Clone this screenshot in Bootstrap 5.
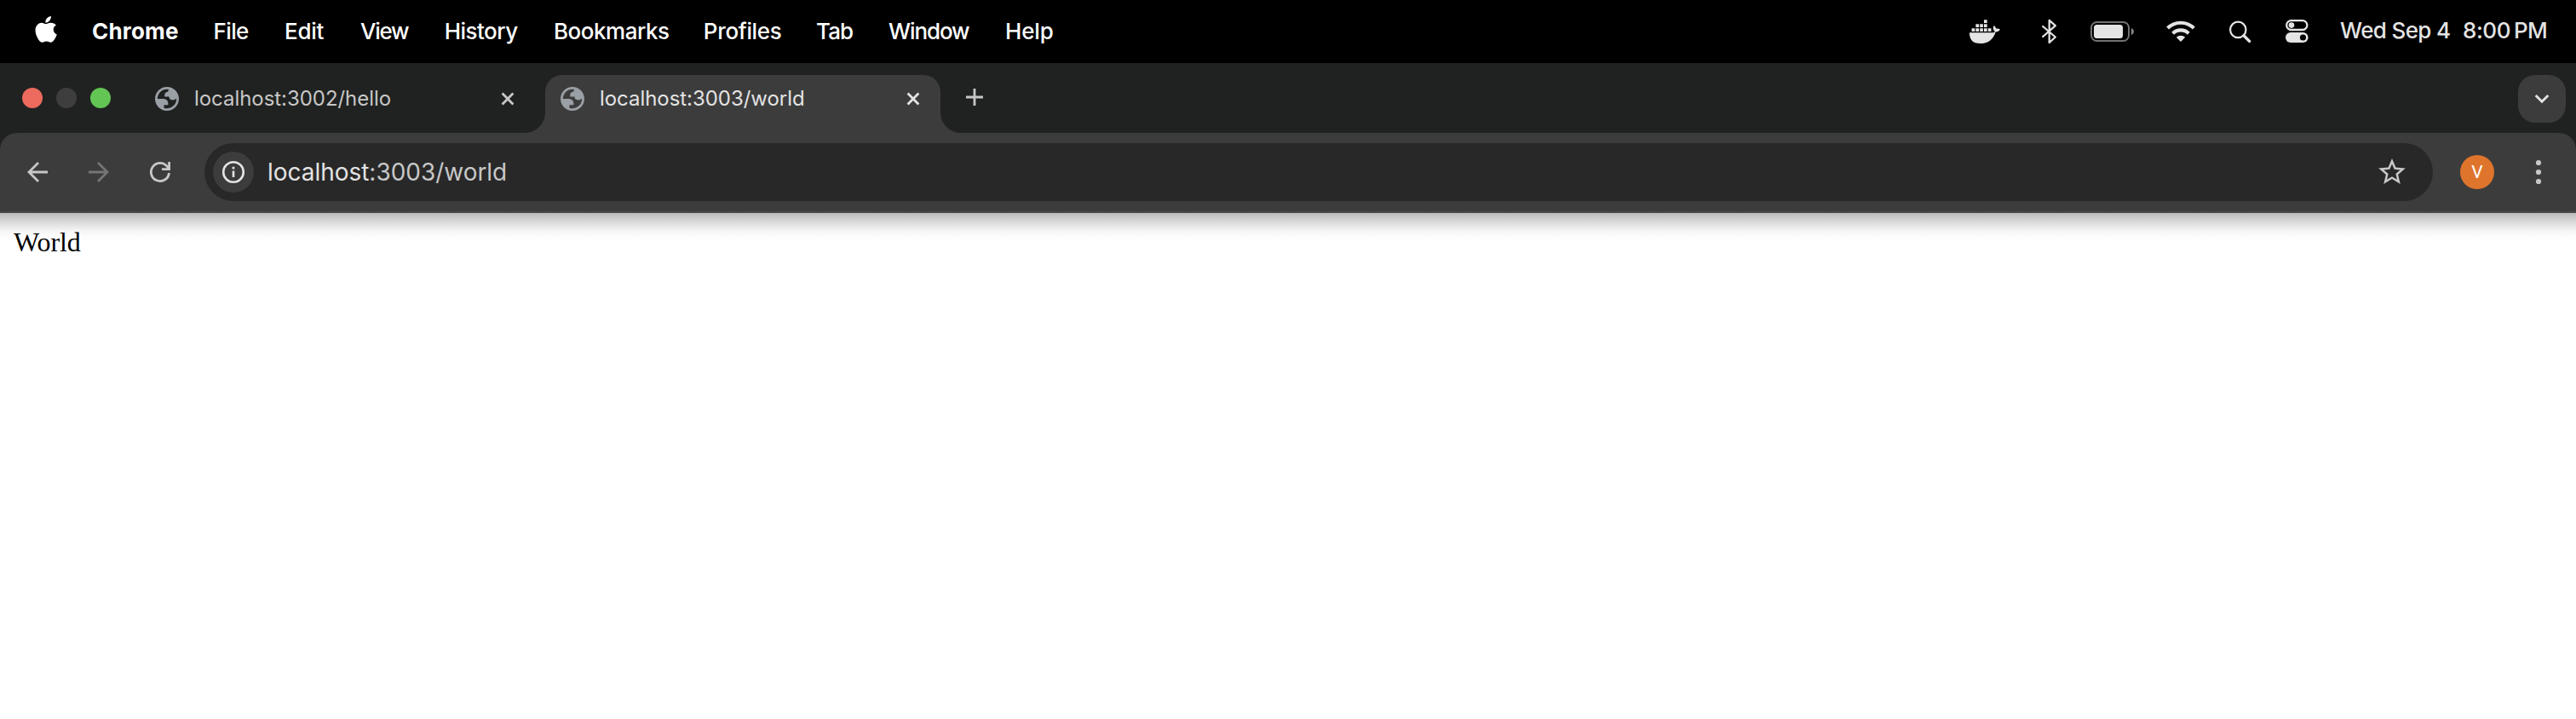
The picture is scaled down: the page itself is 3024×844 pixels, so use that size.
<!DOCTYPE html>
<html lang="en">
<head>
<meta charset="utf-8">
<title>localhost:3003/world</title>
<link href="https://cdn.jsdelivr.net/npm/bootstrap@5.3.0/dist/css/bootstrap.min.css" rel="stylesheet">
<script src="https://cdn.jsdelivr.net/npm/bootstrap@5.3.0/dist/js/bootstrap.bundle.min.js"></script>
<style>
  body { font-family: "Inter", "Liberation Sans", sans-serif; background: #fff; height: 844px; overflow: hidden; }
  svg { display: block; flex: none; }
  .menubar { height: 74px; background: #000; color: #fff; font-size: 26px; font-weight: 500; padding-left: 41px; white-space: nowrap; }
  .menus { display: grid; line-height: 73px; grid-template-columns: 67px 142.5px 83.5px 89px 98.7px 128.3px 175.8px 132.2px 85px 137px 60px; }
  .menus svg { margin-top: 19px; }
  .menus b { font-weight: 700; letter-spacing: .19px; }
  .tray { display: grid; color: #e4e4e4; line-height: 71px; height: 74px; grid-template-columns: 85px 57px 89px 74px 66px 64px 144px 60px 73px; }
  .tray svg { margin-top: 22px; }
  .tabstrip { height: 82px; background: #202221; padding: 14px 12px 0 26px; }
  .light { width: 24px; height: 24px; border-radius: 50%; margin: 15px 16px 0 0; }
  .tab-item { width: 464px; height: 68px; font-size: 24px; line-height: 55px; color: #c7c7c7; padding-left: 18px; letter-spacing: -.05px; }
  .tab-idle { width: 476px; margin-left: 18px; }
  .tab-item .globe { margin: 14px 18px 0 0; }
  .tab-item .shut { margin: 20px 24px 0 auto; }
  .tab-idle .shut { margin-right: 36px; }
  .tab-on { position: relative; background: #3c3c3c; color: #e3e3e3; border-radius: 20px 20px 0 0; }
  .tab-on::before, .tab-on::after { content: ""; position: absolute; bottom: 0; width: 24px; height: 24px; }
  .tab-on::before { right: 100%; background: radial-gradient(circle at 0 0, transparent 23.5px, #3c3c3c 24.5px); }
  .tab-on::after { left: 100%; background: radial-gradient(circle at 100% 0, transparent 23.5px, #3c3c3c 24.5px); }
  .tab-plus { margin: 16px 0 0 30px; }
  .tab-search { width: 56px; height: 56px; border-radius: 20px; background: #3c3c3c; }
  .under { background: #202221; }
  .toolbar { height: 94px; background: #3c3c3c; border-bottom: 2px solid #474546; border-radius: 20px 20px 0 0; padding: 0 40px 0 32px; }
  .nav-icons { gap: 48px; width: 208px; }
  .omni { width: 2616px; height: 68px; border-radius: 34px; background: #282828; padding: 0 32px 0 10px; font-size: 28px; line-height: 68px; color: #c7c7c7; letter-spacing: -.03px; }
  .omni .host { color: #e3e3e3; }
  .omni .star { margin-bottom: 3px; }
  .site-info { width: 48px; height: 48px; border-radius: 50%; background: #3c3c3c; margin-right: 16px; }
  .avatar { width: 40px; height: 40px; border-radius: 50%; background: #df742c; color: #fff; font: 400 21px/40px Roboto, sans-serif; margin-left: 32px; }
  .page { height: 594px; padding: 16px; font: 32px/36px "Liberation Serif", serif; letter-spacing: -.1px; color: #000;
    background: linear-gradient(#bbb9ba 0, #c7c6c6 4px, #d6d5d5 9px, #e7e6e7 15px, #f5f5f5 21px, #fcfcfc 27px, #fff 34px) no-repeat 0 0 / 100% 34px; }
</style>
</head>
<body>
<svg width="0" height="0" class="position-absolute">
  <symbol id="globe" viewBox="2 2 20 20"><path fill="#9aa0a6" fill-rule="evenodd" d="M12 2C6.48 2 2 6.48 2 12s4.48 10 10 10 10-4.48 10-10S17.52 2 12 2zM4 12h4.4c3.407.022 4.922 1.73 4.543 5.127H9.488v2.47a8.004 8.004 0 0 0 10.498-8.083C19.327 12.504 18.332 13 17 13c-2.137 0-3.206-.916-3.206-2.75h-3.748c-.274-2.728.683-4.092 2.87-4.092 0-.975.327-1.597.811-1.97A8.004 8.004 0 0 0 4 12z"/></symbol>
  <symbol id="shut" viewBox="0 0 16 16"><path d="M1.6 1.6l12.8 12.8M14.4 1.6L1.6 14.4" stroke="currentColor" stroke-width="2.8"/></symbol>
</svg>

<header class="menubar d-flex justify-content-between">
  <div class="menus">
    <svg width="26" height="31" viewBox="0 0 26 31" fill="#fff"><path d="M18.9 0c.2 2-.6 3.900-1.800 5.300-1.200 1.400-3 2.400-4.800 2.300-.2-1.900.7-3.900 1.800-5.100C15.400 1.100 17.300.1 18.900 0z"/><path d="M25 10.600c-2.300 1.400-3.300 3.100-3.300 5.200 0 2.600 1.600 4.800 4.100 5.700-.6 1.900-1.500 3.700-2.700 5.500-1.300 1.900-2.600 3.700-4.600 3.700s-2.600-1.200-4.900-1.200-3 1.200-4.900 1.300c-2 0-3.500-2-4.800-3.900C1.200 23-.8 16 1.500 12c1.300-2.600 3.700-4.200 6.300-4.300 2 0 3.800 1.400 5 1.400s3.500-1.700 5.900-1.400c2.500.1 4.800 1.200 6.300 2.900z"/></svg>
    <b>Chrome</b>
    <span style="letter-spacing:-.6px">File</span>
    <span style="letter-spacing:-.27px">Edit</span>
    <span style="letter-spacing:-1.3px">View</span>
    <span style="letter-spacing:-.53px">History</span>
    <span style="letter-spacing:-.48px">Bookmarks</span>
    <span style="letter-spacing:-.32px">Profiles</span>
    <span style="letter-spacing:-.9px">Tab</span>
    <span style="letter-spacing:-1.1px">Window</span>
    <span style="letter-spacing:-.16px">Help</span>
  </div>
  <div class="tray">
    <svg width="36" height="30" viewBox="0 0 36 30" fill="currentColor"><path d="M0 16.200h28.200c1.200-.2 1.600-.8 1.300-1.800-1.900-1.700-2.200-3.900-.8-6.500 1.500 1 2.300 2.200 2.400 3.700 1.800-.4 3.300-.1 4.900.9-1 2-2.800 2.800-5.300 2.900C27.700 24.500 22 29 12.500 29 3.700 29 0 24.500 0 16.200z"/><path d="M2.600 11.200h3.700v3.800H2.600zM7.400 11.200h3.700v3.800H7.400zM12.200 11.200h3.700v3.800h-3.700zM17 11.200h3.700v3.800H17zM21.800 11.200h3.700v3.800h-3.700zM7.400 6.300h3.700v3.700H7.400zM12.200 6.300h3.700v3.700h-3.700zM17 6.300h3.700v3.700H17zM17 1.200h3.700v3.700H17z"/></svg>
    <svg width="18" height="30" viewBox="0 0 18 30" fill="none" stroke="currentColor" stroke-width="2.300" stroke-linejoin="round" stroke-linecap="round"><path d="M1.200 9L15.800 21.500 8.700 28V1.800l7.100 6.400L1.200 21"/></svg>
    <svg width="52" height="30" viewBox="0 0 52 30"><rect x="1" y="4" width="44" height="22" rx="6.500" fill="none" stroke="#727272" stroke-width="2"/><rect x="4" y="7" width="34" height="16" rx="3.500" fill="currentColor"/><path d="M48 11c3.800 1.500 3.800 6.500 0 8z" fill="#8a8a8a"/></svg>
    <svg width="34" height="30" viewBox="0 0 34 30" fill="none" stroke="currentColor" stroke-width="4.200"><path d="M1.600 11.100a21.800 21.800 0 0 1 30.800 0"/><path d="M7.700 17.200a13.200 13.200 0 0 1 18.600 0"/><path fill="currentColor" stroke="none" d="M17 27l-5.200-5.200a7.500 7.500 0 0 1 10.400 0z"/></svg>
    <svg width="26" height="30" viewBox="0 0 26 30" fill="none" stroke="currentColor"><circle cx="10.300" cy="12.900" r="9.200" stroke-width="2.200"/><path d="M17 19.800l6.600 6.600" stroke-width="3.400" stroke-linecap="round"/></svg>
    <svg width="27" height="30" viewBox="0 0 27 30"><rect x="1.200" y="2.200" width="24.200" height="10.800" rx="5.400" fill="none" stroke="currentColor" stroke-width="2.300"/><circle cx="7" cy="7.600" r="3.300" fill="currentColor"/><rect y="16" width="26.600" height="12" rx="6" fill="currentColor"/><circle cx="20.500" cy="22" r="3.600"/></svg>
    <span style="letter-spacing:-.64px">Wed Sep 4</span>
    <span style="letter-spacing:-.44px">8:00</span>
    <span style="letter-spacing:-.68px">PM</span>
  </div>
</header>

<div class="tabstrip d-flex align-items-start">
  <span class="light" style="background:#ed6a5e"></span>
  <span class="light" style="background:#3e3e3e"></span>
  <span class="light" style="background:#62c554"></span>
  <div class="tab-item tab-idle d-flex align-items-start">
    <svg class="globe" width="28" height="28"><use href="#globe"/></svg>
    <span>localhost:3002/hello</span>
    <svg class="shut" width="16" height="16"><use href="#shut"/></svg>
  </div>
  <div class="tab-item tab-on d-flex align-items-start">
    <svg class="globe" width="28" height="28"><use href="#globe"/></svg>
    <span>localhost:3003/world</span>
    <svg class="shut" width="16" height="16"><use href="#shut"/></svg>
  </div>
  <svg class="tab-plus" width="20" height="20" stroke="#c7c7c7" stroke-width="2.800"><path d="M10 0v20M0 10h20"/></svg>
  <div class="tab-search ms-auto d-flex align-items-center justify-content-center">
    <svg width="18" height="12" fill="none" stroke="#e3e3e3" stroke-width="2.800"><path d="M1.700 1.900L9 9.200l7.300-7.300"/></svg>
  </div>
</div>

<div class="under">
  <div class="toolbar d-flex align-items-center">
    <div class="nav-icons d-flex">
      <svg width="24" height="24" fill="none" stroke="#c7c7c7" stroke-width="2.800"><path d="M24 12H2M13 1L2 12l11 11"/></svg>
      <svg width="24" height="24" fill="none" stroke="#757575" stroke-width="2.800"><path d="M0 12h22M11 1l11 11-11 11"/></svg>
      <svg width="24" height="24" fill="none" stroke="#c7c7c7" stroke-width="2.800"><path d="M22.500 13A10.600 10.600 0 1 1 20.500 5.700L22.500 8.500M22.600 0v8.600H14"/></svg>
    </div>
    <div class="omni d-flex align-items-center">
      <div class="site-info d-flex align-items-center justify-content-center">
        <svg width="28" height="28" fill="none" stroke="#e3e3e3" stroke-width="2.600"><circle cx="14" cy="14" r="11.800"/><path d="M14 12.500v7.500M14 7.800v2.600"/></svg>
      </div>
      <span><span class="host">localhost</span>:3003/world</span>
      <svg class="star ms-auto" width="32" height="30" viewBox="2 2 20 19" fill="#c7c7c7"><path d="M22 9.240l-7.190-.62L12 2 9.190 8.630 2 9.240l5.460 4.730L5.820 21 12 17.270 18.180 21l-1.630-7.030L22 9.240zM12 15.400l-3.760 2.270 1-4.280-3.320-2.880 4.380-.38L12 6.100l1.710 4.040 4.380.38-3.320 2.880 1 4.280L12 15.400z"/></svg>
    </div>
    <div class="avatar text-center">V</div>
    <svg class="ms-auto" width="8" height="30" fill="#c7c7c7"><circle cx="4" cy="4" r="3.100"/><circle cx="4" cy="15" r="3.100"/><circle cx="4" cy="26" r="3.100"/></svg>
  </div>
</div>

<main class="page">World</main>
</body>
</html>
